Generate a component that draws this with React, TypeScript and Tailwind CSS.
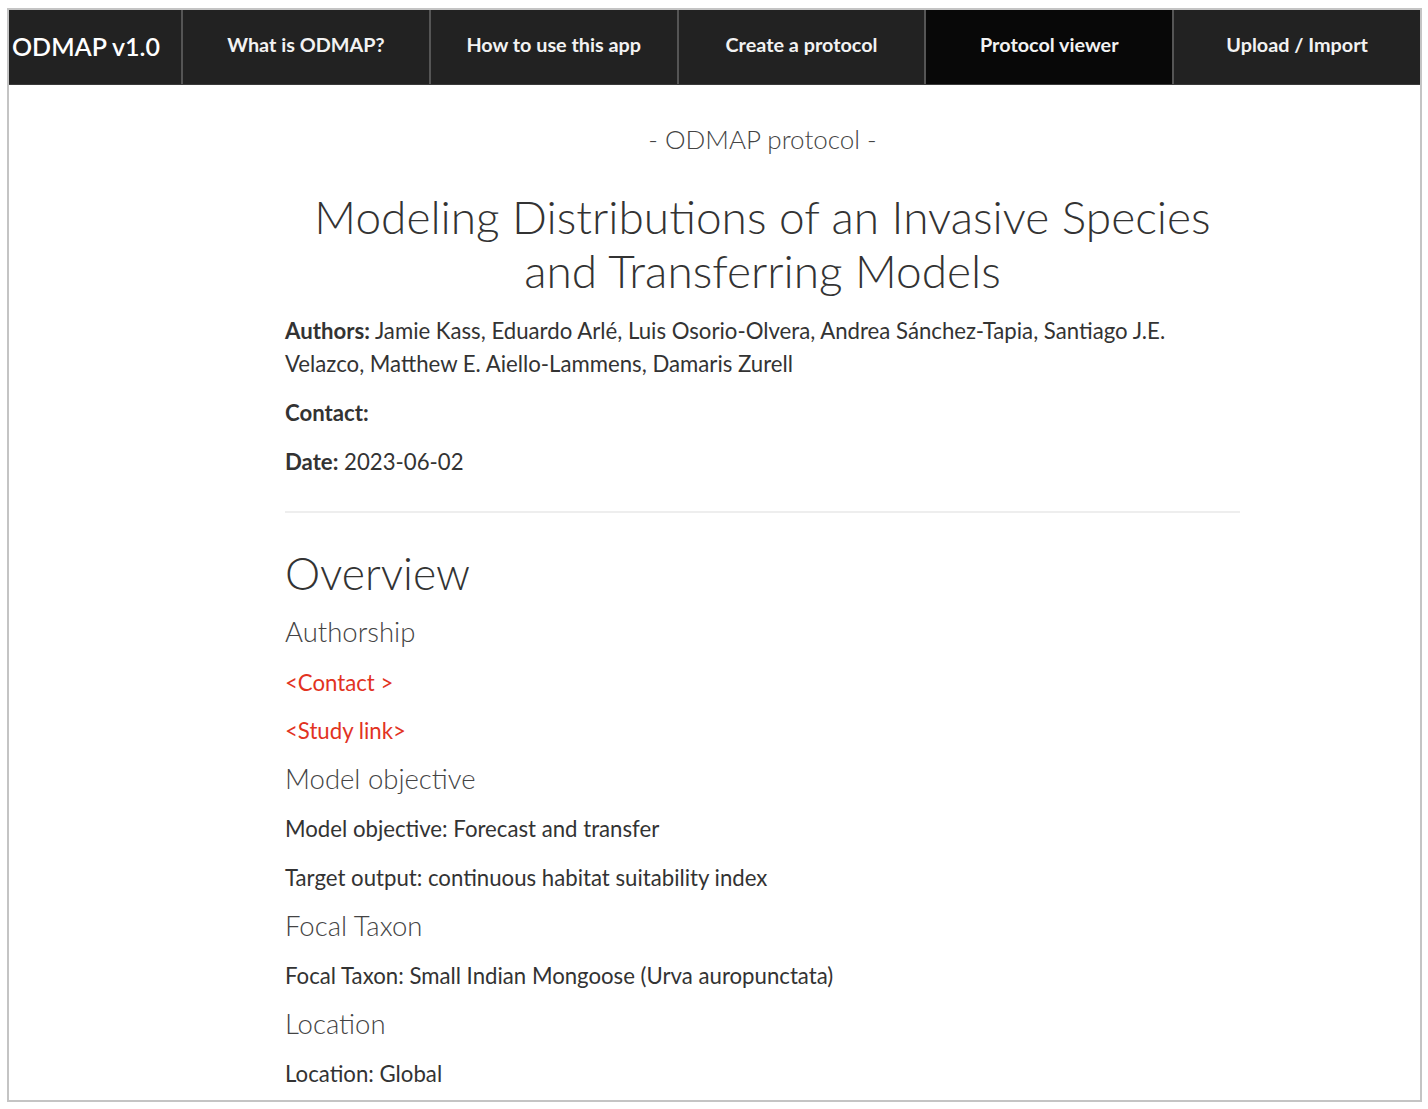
const navItems = [
  "What is ODMAP?",
  "How to use this app",
  "Create a protocol",
  "Protocol viewer",
  "Upload / Import",
];

function Field({ label, value }: { label: string; value: string }) {
  return (
    <p className="mt-[15px] text-[22.2px] leading-[34px] text-[#333]">
      {label}: {value}
    </p>
  );
}

function SubHeading({ children }: { children: string }) {
  return <h3 className="mt-[13px] text-[27.5px] font-light leading-[36px] text-[#444]">{children}</h3>;
}

export default function App() {
  return (
    <div className="min-h-screen bg-white pl-[7px] pr-[6px] pt-[8px] pb-[7px] font-['Source_Sans_Pro','Lato',sans-serif]">
      <div className="h-[1094px] overflow-hidden border-2 border-[#c4c4c4]">
        <nav className="flex h-[75px] border-b border-[#3a3a3a] bg-[#222]">
          <div className="flex w-[174px] items-center border-r-2 border-[#555] pl-[3px] text-[25px] font-semibold text-white">
            ODMAP v1.0
          </div>
          {navItems.map((item, i) => (
            <div
              key={item}
              className={
                "flex flex-1 items-center justify-center pb-[4px] text-[19.8px] font-bold text-[#f2f2f2] " +
                (i < navItems.length - 1 ? "border-r-2 border-[#555] " : "") +
                (item === "Protocol viewer" ? "bg-[#080808]" : "")
              }
            >
              {item}
            </div>
          ))}
        </nav>

        <main className="ml-[276px] w-[955px] pt-[37px]">
          <p className="text-center text-[26px] font-light leading-[34px] text-[#444]">- ODMAP protocol -</p>
          <h1 className="mt-[34px] text-center text-[46px] font-light leading-[54px] text-[#333]">
            Modeling Distributions of an Invasive Species
            <br />
            and Transferring Models
          </h1>
          <p className="mt-[16px] text-[22.2px] leading-[33px] text-[#333]">
            <span className="font-bold">Authors:</span> Jamie Kass, Eduardo Arlé, Luis Osorio-Olvera, Andrea
            Sánchez-Tapia, Santiago J.E. Velazco, Matthew E. Aiello-Lammens, Damaris Zurell
          </p>
          <p className="mt-[16px] text-[22.2px] leading-[33px] text-[#333]">
            <span className="font-bold">Contact:</span>
          </p>
          <p className="mt-[16px] text-[22.2px] leading-[33px] text-[#333]">
            <span className="font-bold">Date:</span> 2023-06-02
          </p>
          <hr className="mt-[33px] border-t-2 border-[#eee]" />

          <h2 className="mt-[32px] text-[44.5px] font-light leading-[56px] text-[#333]">Overview</h2>
          <SubHeading>Authorship</SubHeading>
          <p className="mt-[16px] text-[22.2px] leading-[34px] text-[#e2331f]">&lt;Contact &gt;</p>
          <p className="mt-[14px] text-[22.2px] leading-[34px] text-[#e2331f]">&lt;Study link&gt;</p>
          <SubHeading>Model objective</SubHeading>
          <Field label="Model objective" value="Forecast and transfer" />
          <Field label="Target output" value="continuous habitat suitability index" />
          <SubHeading>Focal Taxon</SubHeading>
          <Field label="Focal Taxon" value="Small Indian Mongoose (Urva auropunctata)" />
          <SubHeading>Location</SubHeading>
          <Field label="Location" value="Global" />
        </main>
      </div>
    </div>
  );
}
